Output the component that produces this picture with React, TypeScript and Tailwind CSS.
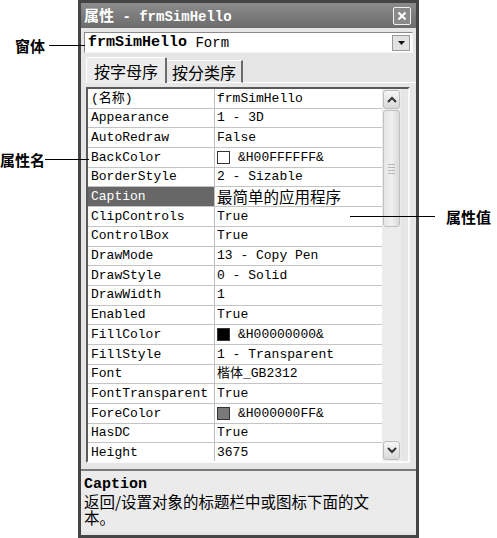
import React from 'react';

const MONO = "font-['Liberation_Mono','Noto_Sans_CJK_SC',monospace]";
const CJK = "font-['Noto_Sans_CJK_SC','Liberation_Sans',sans-serif]";

type Row = { name: string; value: string; swatch?: string; selected?: boolean; cjk?: boolean };

const rows: Row[] = [
  { name: '(名称)', value: 'frmSimHello' },
  { name: 'Appearance', value: '1 - 3D' },
  { name: 'AutoRedraw', value: 'False' },
  { name: 'BackColor', value: '&H00FFFFFF&', swatch: 'bg-white' },
  { name: 'BorderStyle', value: '2 - Sizable' },
  { name: 'Caption', value: '最简单的应用程序', selected: true, cjk: true },
  { name: 'ClipControls', value: 'True' },
  { name: 'ControlBox', value: 'True' },
  { name: 'DrawMode', value: '13 - Copy Pen' },
  { name: 'DrawStyle', value: '0 - Solid' },
  { name: 'DrawWidth', value: '1' },
  { name: 'Enabled', value: 'True' },
  { name: 'FillColor', value: '&H00000000&', swatch: 'bg-black' },
  { name: 'FillStyle', value: '1 - Transparent' },
  { name: 'Font', value: '楷体_GB2312' },
  { name: 'FontTransparent', value: 'True' },
  { name: 'ForeColor', value: '&H000000FF&', swatch: 'bg-[#7a7a7a]' },
  { name: 'HasDC', value: 'True' },
  { name: 'Height', value: '3675' },
];

function Chevron({ up }: { up?: boolean }) {
  return (
    <svg width="10" height="7" viewBox="0 0 10 7">
      <path
        d={up ? 'M1 6 L5 2 L9 6' : 'M1 1 L5 5 L9 1'}
        fill="none"
        stroke="#333"
        strokeWidth="2"
      />
    </svg>
  );
}

function Callout({ label, className, lineClass }: { label: string; className: string; lineClass: string }) {
  return (
    <div className={`absolute flex items-center ${className}`}>
      <span className={`${CJK} text-[15px] leading-none text-black font-bold`}>{label}</span>
      <div className={`h-[1.5px] bg-black ${lineClass}`} />
    </div>
  );
}

export default function App() {
  return (
    <div className="relative w-[497px] h-[538px] bg-white overflow-hidden">
      <div className="ml-[78px] w-[341px] h-[538px] bg-[#454545] p-[3px] flex flex-col">
        {/* title bar */}
        <div className="h-[25px] flex items-center justify-between bg-gradient-to-b from-[#8c8c8c] to-[#6c6c6c] pl-[3px] pr-[5px]">
          <div className="flex items-baseline text-white font-bold">
            <span className={`${CJK} text-[15px]`}>属性</span>
            <span className={`${MONO} text-[14px] whitespace-pre`}> - frmSimHello</span>
          </div>
          <div className="w-[18px] h-[18px] border border-[#f0f0f0] rounded-[2px] bg-[#8a8a8a] flex items-center justify-center">
            <svg width="10" height="10" viewBox="0 0 10 10">
              <path d="M1.5 1.5 L8.5 8.5 M8.5 1.5 L1.5 8.5" stroke="#fff" strokeWidth="2.2" />
            </svg>
          </div>
        </div>

        {/* body */}
        <div className="flex-1 bg-[#e6e6e6] flex flex-col">
          {/* object combo */}
          <div className="mt-[4px] mx-[3px] h-[21px] bg-white border border-t-[#8a8a8a] border-l-[#8a8a8a] border-b-[#f4f4f4] border-r-[#f4f4f4] flex items-center pl-[3px] pr-[2px]">
            <span className={`${MONO} text-[15px] font-bold leading-none`}>frmSimHello</span>
            <span className={`${MONO} text-[14px] leading-none whitespace-pre`}> Form</span>
            <div className="ml-auto w-[18px] h-[16px] bg-[#e2e2e2] border border-[#9a9a9a] flex items-center justify-center">
              <svg width="7" height="4" viewBox="0 0 7 4">
                <path d="M0 0 H7 L3.5 4 Z" fill="#111" />
              </svg>
            </div>
          </div>

          {/* tabs */}
          <div className={`mt-[3px] ml-[5px] h-[27px] flex items-end ${CJK} text-[16px]`}>
            <div className="h-[26px] px-[7px] flex items-center bg-[#ececec] border-t border-l border-white border-r-2 border-r-[#6a6a6a] rounded-t-[2px]">
              按字母序
            </div>
            <div className="h-[23px] px-[5px] flex items-center bg-[#e6e6e6] border-t border-white border-r-2 border-r-[#6a6a6a] border-b border-b-white">
              按分类序
            </div>
            <div className="flex-1 h-px bg-white" />
          </div>

          {/* property grid */}
          <div className="mt-[4px] ml-[5px] mr-[6px] h-[376px] border-2 border-t-[#5a5a5a] border-l-[#5a5a5a] border-b-[#fafafa] border-r-[#fafafa] flex overflow-hidden">
            <div className="w-[294px] flex flex-col bg-white overflow-hidden">
              {rows.map(r => (
                <div key={r.name} className="h-[19.7px] shrink-0 flex border-b border-[#c4c4c4]">
                  <div
                    className={`w-[127px] pl-[3px] flex items-center border-r border-[#bdbdbd] ${MONO} text-[13px] whitespace-pre ${
                      r.selected ? 'bg-[#676767] text-white' : 'text-black'
                    }`}
                  >
                    {r.name}
                  </div>
                  <div className="flex-1 pl-[2px] flex items-center gap-[8px] text-black">
                    {r.swatch && <span className={`w-[13px] h-[13px] border border-[#333] ${r.swatch}`} />}
                    <span className={r.cjk ? `${CJK} text-[15.5px]` : `${MONO} text-[13px] whitespace-pre`}>
                      {r.value}
                    </span>
                  </div>
                </div>
              ))}
            </div>
            {/* scrollbar */}
            <div className="w-[19px] bg-[#ececec] flex flex-col items-center py-px">
              <div className="w-[17px] h-[19px] rounded-[3px] border border-[#bdbdbd] bg-gradient-to-b from-[#f6f6f6] to-[#d8d8d8] flex items-center justify-center">
                <Chevron up />
              </div>
              <div className="mt-px w-[17px] h-[117px] rounded-[3px] border border-[#c0c0c0] bg-gradient-to-r from-[#e6e6e6] via-[#f0f0f0] to-[#dadada] flex flex-col items-center justify-center gap-[2px]">
                <div className="w-[7px] h-px bg-[#b5b5b5]" />
                <div className="w-[7px] h-px bg-[#b5b5b5]" />
                <div className="w-[7px] h-px bg-[#b5b5b5]" />
                <div className="w-[7px] h-px bg-[#b5b5b5]" />
              </div>
              <div className="flex-1" />
              <div className="w-[17px] h-[19px] rounded-[3px] border border-[#bdbdbd] bg-gradient-to-b from-[#f6f6f6] to-[#d8d8d8] flex items-center justify-center">
                <Chevron />
              </div>
            </div>
          </div>

          {/* description */}
          <div className="mt-[6px] flex-1 border-t-2 border-[#7a7a7a] bg-[#ebebeb] pl-[3px] pr-[4px] pt-[6px] mb-[3px]">
            <div className={`${MONO} text-[15px] font-bold leading-[15px]`}>Caption</div>
            <div className={`${CJK} text-[15.5px] leading-[16px] w-[300px] mt-[1px]`}>
              返回/设置对象的标题栏中或图标下面的文本。
            </div>
          </div>
        </div>
      </div>

      <Callout label="窗体" className="left-[15px] top-[38px]" lineClass="ml-[4px] w-[36px]" />
      <Callout label="属性名" className="left-0 top-[152px]" lineClass="w-[44px]" />
      <div className="absolute left-[350px] top-[209px] flex items-center">
        <div className="w-[85px] h-[1.5px] bg-black" />
        <span className={`${CJK} ml-[11px] text-[15px] leading-none font-bold`}>属性值</span>
      </div>
    </div>
  );
}
